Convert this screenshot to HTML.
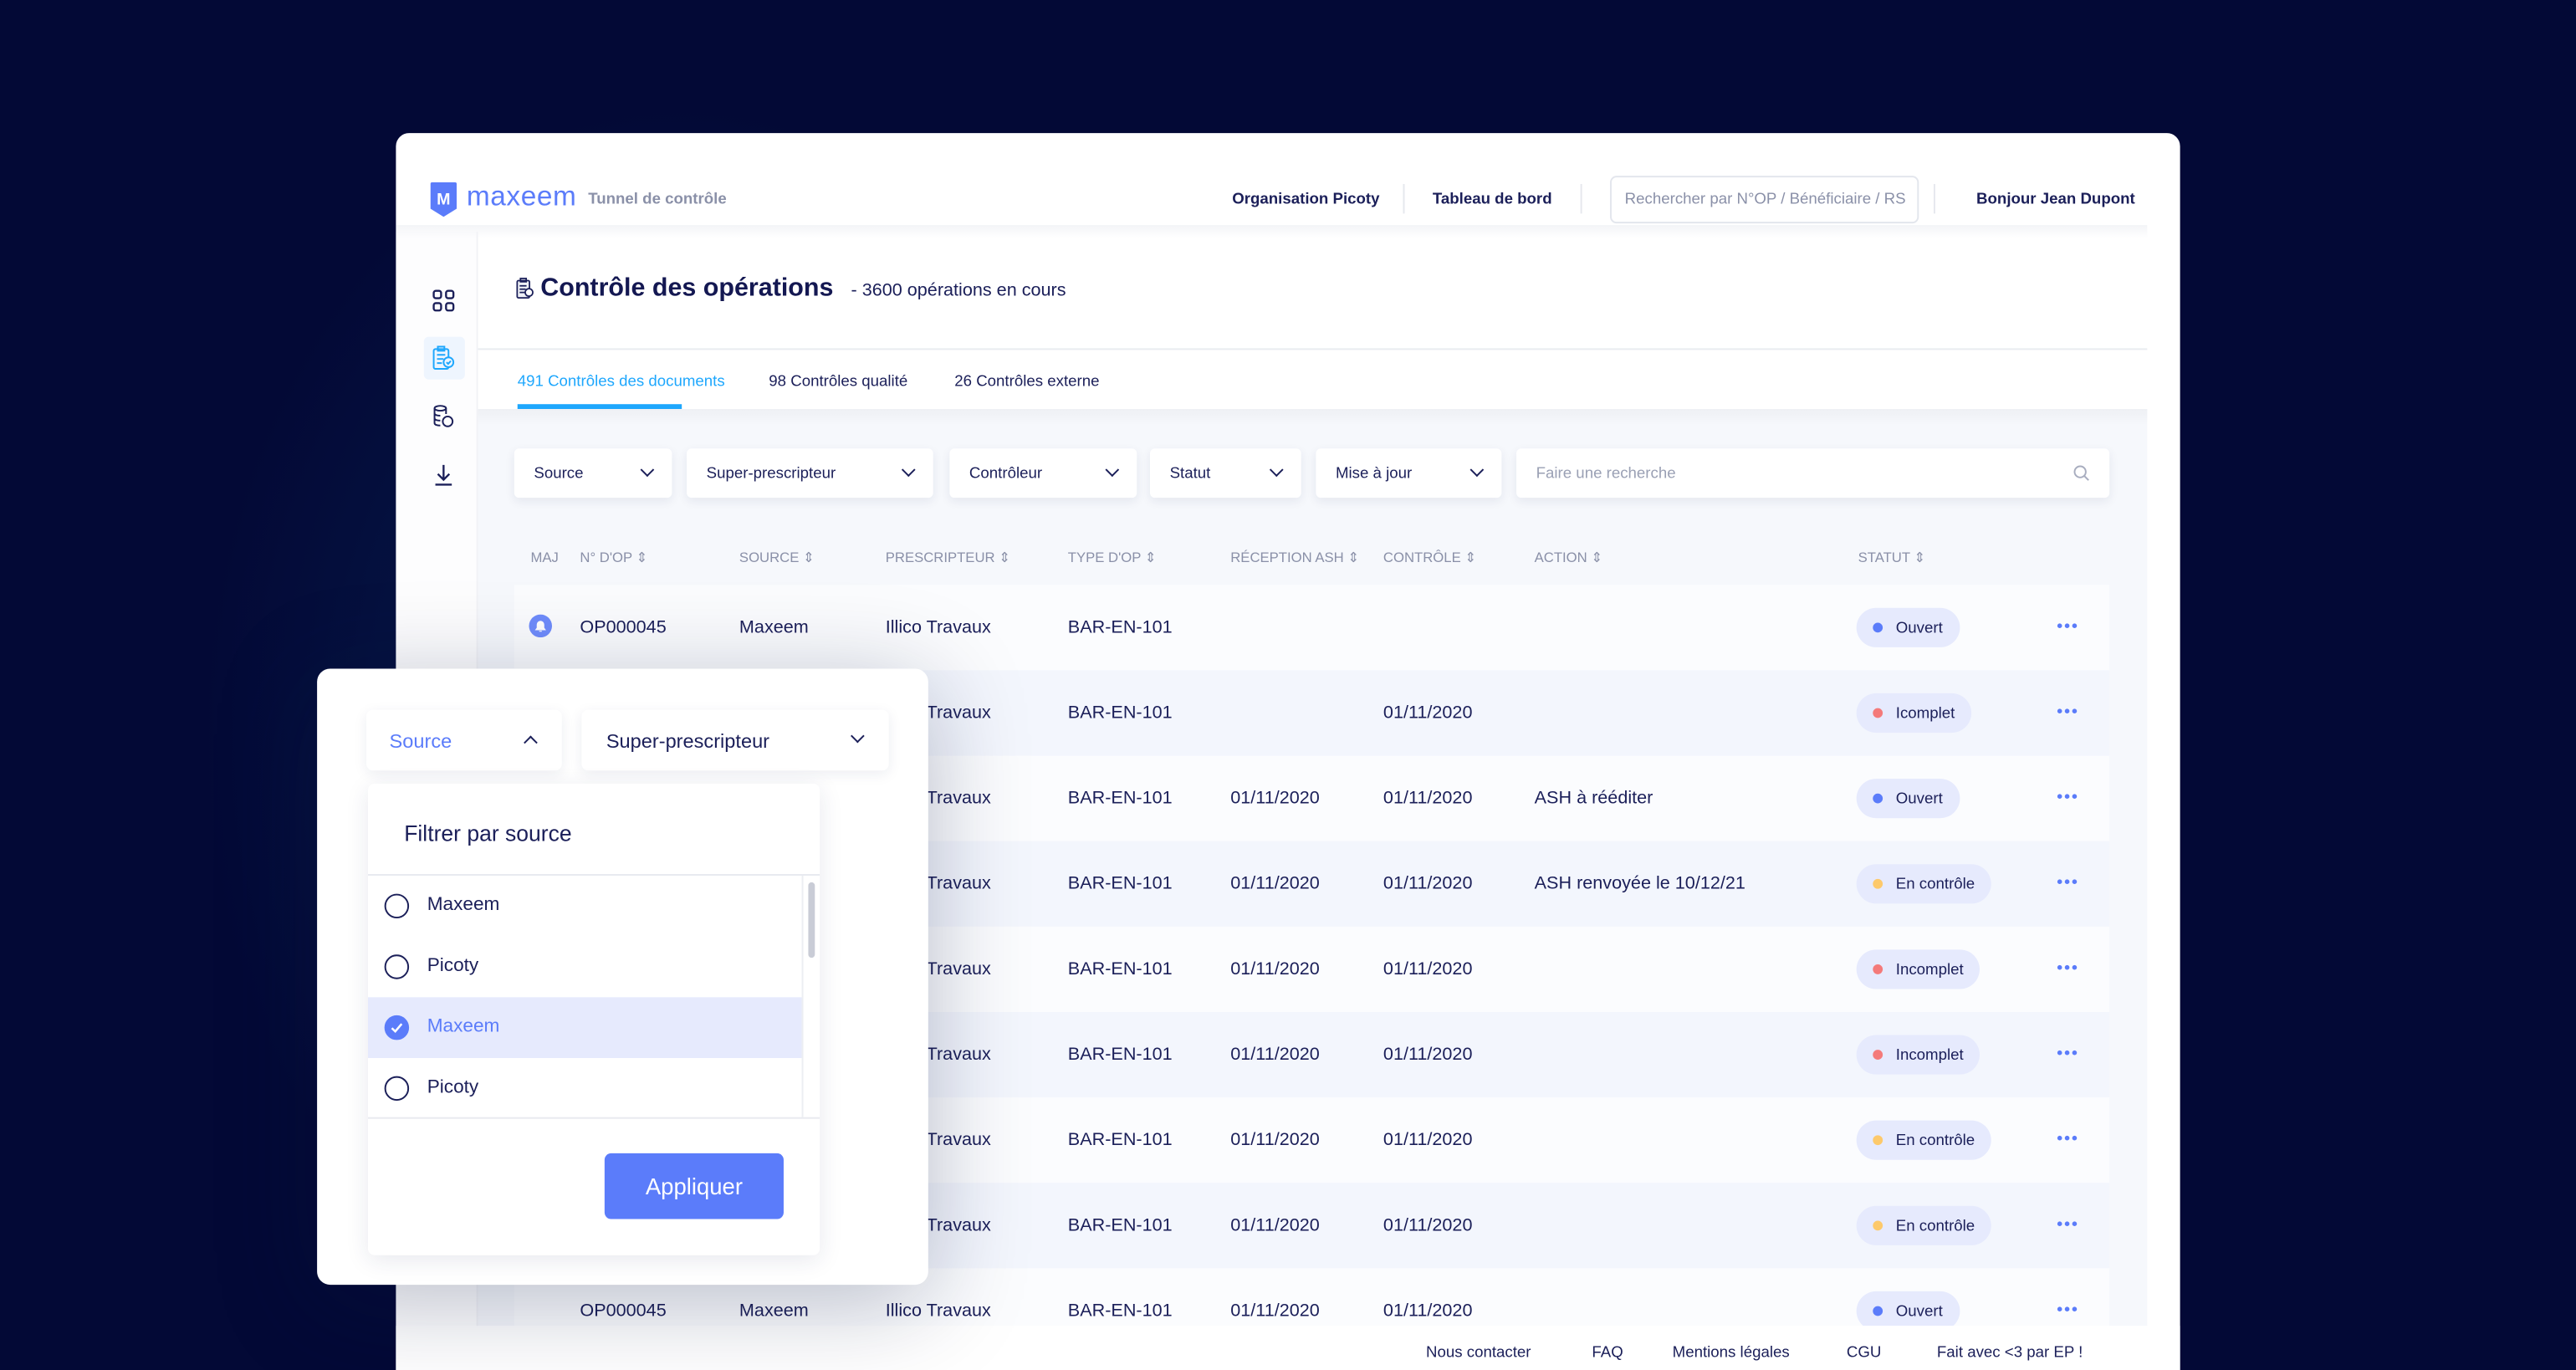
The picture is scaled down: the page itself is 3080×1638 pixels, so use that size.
<!DOCTYPE html>
<html><head><meta charset="utf-8"><style>
*{box-sizing:border-box;margin:0;padding:0}
html,body{width:3080px;height:1638px;overflow:hidden;background:#030936;position:relative}
#s{position:absolute;left:0;top:0;width:1568px;height:833.5px;transform:scale(1.96429);transform-origin:0 0;font-family:"Liberation Sans",sans-serif;color:#1b1f59;overflow:hidden;background:#030936}
.a{position:absolute}
.glow{left:120px;top:60px;width:420px;height:774px;background:radial-gradient(ellipse at 70% 50%,rgba(10,40,90,.7),rgba(3,9,54,0) 70%)}
.card{left:241px;top:81px;width:1086px;height:753px;background:#fff;border-radius:8px 8px 0 0;overflow:hidden}
.t{position:absolute;white-space:nowrap}
.nav{font-size:9.5px;font-weight:bold;color:#1b1f59}
.sep{position:absolute;width:1px;height:18px;background:#e6e8ee}
.dd{position:absolute;top:273px;height:30px;background:#fff;border-radius:3px;box-shadow:0 2px 6px rgba(30,40,90,.08);font-size:9.5px;padding:10px 0 0 12px}
.chev{position:absolute;right:12px;top:10px;width:6px;height:6px;border-right:1.2px solid #1b1f59;border-bottom:1.2px solid #1b1f59;transform:rotate(45deg)}
.th{position:absolute;top:334px;font-size:8.5px;color:#8a90a8}
.row{position:absolute;left:313px;width:971px;height:52px}
.c{position:absolute;top:20px;font-size:11px;color:#1b1f59}
.pill{position:absolute;left:817px;top:14px;height:24px;border-radius:12px;background:#e6eafd;font-size:9.5px;padding:7px 10px 0 24px;color:#1b1f59}
.pill i{position:absolute;left:10px;top:9px;width:6px;height:6px;border-radius:3px}
.dots{position:absolute;left:939px;top:20px;font-size:10px;color:#5b7cfa;letter-spacing:1px;font-weight:bold}
.opt{position:absolute;left:0;width:264px;height:37px;font-size:11.5px}
.rad{position:absolute;left:10px;top:11px;width:15px;height:15px;border:1.2px solid #1b1f59;border-radius:50%}
</style></head><body><div id="s">
<div class="a glow"></div>
<div class="a card">
 <svg class="a" style="left:21px;top:30px" width="16" height="21" viewBox="0 0 16 21"><path d="M0 1Q0 0 1 0H15Q16 0 16 1V16L8 21L0 16Z" fill="#5b7cfa"/><text x="8" y="13.5" font-size="10" font-weight="bold" fill="#fff" text-anchor="middle" font-family="Liberation Sans">M</text></svg>
 <div class="t" style="left:43px;top:29px;font-size:17px;color:#5b7cfa;letter-spacing:.3px">maxeem</div>
 <div class="t" style="left:117px;top:35px;font-size:9.5px;color:#8a90a8;font-weight:bold">Tunnel de contrôle</div>
 <div class="t nav" style="left:509px;top:35px">Organisation Picoty</div>
 <div class="sep" style="left:613px;top:31px"></div>
 <div class="t nav" style="left:631px;top:35px">Tableau de bord</div>
 <div class="sep" style="left:721px;top:31px"></div>
 <div class="a" style="left:739px;top:26px;width:188px;height:29px;border:1px solid #e3e6ed;border-radius:4px"></div>
 <div class="t" style="left:748px;top:35px;font-size:9.5px;color:#8a90a8">Rechercher par N°OP / Bénéficiaire / RS</div>
 <div class="sep" style="left:936px;top:31px"></div>
 <div class="t nav" style="left:962px;top:35px">Bonjour Jean Dupont</div>
 <div class="a" style="left:0;top:60px;width:50px;height:693px;background:#fdfdfe;box-shadow:inset -1px 0 0 #f1f2f6"></div>
 <div class="a" style="left:0;top:56px;width:1066px;height:8px;background:linear-gradient(#f3f4f7,rgba(255,255,255,0))"></div>
</div>
<svg class="a" style="left:263px;top:176px" width="14" height="14" viewBox="0 0 14 14" fill="none" stroke="#1b1f59" stroke-width="1.2"><rect x="1" y="1" width="4.5" height="4.5" rx="1.3"/><rect x="8.5" y="1" width="4.5" height="4.5" rx="1.3"/><rect x="1" y="8.5" width="4.5" height="4.5" rx="1.3"/><rect x="8.5" y="8.5" width="4.5" height="4.5" rx="1.3"/></svg>
<div class="a" style="left:258px;top:205px;width:25px;height:26px;background:#eef5fe;border-radius:3px"></div>
<svg class="a" style="left:263px;top:210px" width="14" height="16" viewBox="0 0 14 16" fill="none" stroke="#1ea7fd" stroke-width="1"><rect x="1" y="2.5" width="9" height="12" rx="1"/><rect x="3.5" y="1" width="4" height="2.5"/><path d="M3 6H8M3 8.5H7M3 11H6"/><circle cx="10" cy="10.5" r="3" fill="#eef5fe"/><path d="M8.8 10.5l1 1 1.6-1.8"/></svg>
<svg class="a" style="left:263px;top:246px" width="14" height="15" viewBox="0 0 14 15" fill="none" stroke="#1b1f59" stroke-width="1"><ellipse cx="5" cy="2.5" rx="3.5" ry="1.5"/><path d="M1.5 2.5V11.5C1.5 12.5 3 13 5 13M1.5 5.5C1.5 6.5 3 7 5 7M1.5 8.5C1.5 9.5 3 10 5 10M8.5 2.5V6"/><circle cx="9.5" cy="10.5" r="3"/></svg>
<svg class="a" style="left:264px;top:282px" width="12" height="14" viewBox="0 0 12 14" fill="none" stroke="#1b1f59" stroke-width="1.2"><path d="M6 1V10M2.5 6.5L6 10L9.5 6.5M1 13H11"/></svg>
<svg class="a" style="left:314px;top:169px" width="11" height="13" viewBox="0 0 11 13" fill="none" stroke="#1b1f59" stroke-width=".9"><rect x=".8" y="1.8" width="7.5" height="10.5" rx=".8" fill="#eef0f6"/><rect x="2.8" y=".5" width="3.5" height="2"/><path d="M2.3 5H6.5M2.3 7H6M2.3 9H5.5"/><circle cx="8" cy="9" r="2.3" fill="#fff"/></svg>
<div class="t" style="left:329px;top:167px;font-size:15.5px;font-weight:bold;color:#141852">Contrôle des opérations</div>
<div class="t" style="left:518px;top:171px;font-size:11px;color:#1b1f59">- 3600 opérations en cours</div>
<div class="a" style="left:291px;top:212px;width:1016px;height:1px;background:#e9ebf0"></div>
<div class="t" style="left:315px;top:227px;font-size:9.5px;color:#1ea7fd">491 Contrôles des documents</div>
<div class="a" style="left:315px;top:246px;width:100px;height:2.5px;background:#1ea7fd"></div>
<div class="t" style="left:468px;top:227px;font-size:9.5px">98 Contrôles qualité</div>
<div class="t" style="left:581px;top:227px;font-size:9.5px">26 Contrôles externe</div>
<div class="a" style="left:291px;top:249px;width:1016px;height:558px;background:#f6f8fc"></div>
<div class="a" style="left:291px;top:249px;width:1016px;height:10px;background:linear-gradient(#eef0f4,rgba(246,248,252,0))"></div>
<div class="dd" style="left:313px;width:96px">Source<i class="chev"></i></div>
<div class="dd" style="left:418px;width:150px">Super-prescripteur<i class="chev"></i></div>
<div class="dd" style="left:578px;width:114px">Contrôleur<i class="chev"></i></div>
<div class="dd" style="left:700px;width:92px">Statut<i class="chev"></i></div>
<div class="dd" style="left:801px;width:113px">Mise à jour<i class="chev"></i></div>
<div class="dd" style="left:923px;width:361px;color:#9aa0b4">Faire une recherche
<svg class="a" style="right:12px;top:10px" width="10" height="10" viewBox="0 0 10 10" fill="none" stroke="#a8adbf" stroke-width="1"><circle cx="4.2" cy="4.2" r="3.4"/><path d="M6.7 6.7L9.3 9.3"/></svg></div>
<div class="th" style="left:323px">MAJ</div>
<div class="th" style="left:353px">N° D'OP ⇕</div>
<div class="th" style="left:450px">SOURCE ⇕</div>
<div class="th" style="left:539px">PRESCRIPTEUR ⇕</div>
<div class="th" style="left:650px">TYPE D'OP ⇕</div>
<div class="th" style="left:749px">RÉCEPTION ASH ⇕</div>
<div class="th" style="left:842px">CONTRÔLE ⇕</div>
<div class="th" style="left:934px">ACTION ⇕</div>
<div class="th" style="left:1131px">STATUT ⇕</div>

<div class="row" style="top:356px;background:#fbfcfe">
 <svg class="a" style="left:9px;top:18px" width="14" height="14" viewBox="0 0 14 14"><circle cx="7" cy="7" r="7" fill="#6f8cfb"/><path d="M4.2 9.3H9.8L9 8.2V6.2A2 2 0 0 0 5 6.2V8.2Z M6.2 10.2H7.8" fill="#fff" stroke="#fff" stroke-width=".6"/></svg>
 <div class="c" style="left:40px">OP000045</div><div class="c" style="left:137px">Maxeem</div><div class="c" style="left:226px">Illico Travaux</div><div class="c" style="left:337px">BAR-EN-101</div>
 <div class="pill"><i style="background:#5b7cfa"></i>Ouvert</div><div class="dots">•••</div></div>
<div class="row" style="top:408px;background:#f3f6fd">
 <div class="c" style="left:226px">Illico Travaux</div><div class="c" style="left:337px">BAR-EN-101</div><div class="c" style="left:529px">01/11/2020</div>
 <div class="pill"><i style="background:#f47a7a"></i>Icomplet</div><div class="dots">•••</div></div>
<div class="row" style="top:460px;background:#fbfcfe">
 <div class="c" style="left:226px">Illico Travaux</div><div class="c" style="left:337px">BAR-EN-101</div><div class="c" style="left:436px">01/11/2020</div><div class="c" style="left:529px">01/11/2020</div><div class="c" style="left:621px">ASH à rééditer</div>
 <div class="pill"><i style="background:#5b7cfa"></i>Ouvert</div><div class="dots">•••</div></div>
<div class="row" style="top:512px;background:#f3f6fd">
 <div class="c" style="left:226px">Illico Travaux</div><div class="c" style="left:337px">BAR-EN-101</div><div class="c" style="left:436px">01/11/2020</div><div class="c" style="left:529px">01/11/2020</div><div class="c" style="left:621px">ASH renvoyée le 10/12/21</div>
 <div class="pill"><i style="background:#fdc96b"></i>En contrôle</div><div class="dots">•••</div></div>
<div class="row" style="top:564px;background:#fbfcfe">
 <div class="c" style="left:226px">Illico Travaux</div><div class="c" style="left:337px">BAR-EN-101</div><div class="c" style="left:436px">01/11/2020</div><div class="c" style="left:529px">01/11/2020</div>
 <div class="pill"><i style="background:#f47a7a"></i>Incomplet</div><div class="dots">•••</div></div>
<div class="row" style="top:616px;background:#f3f6fd">
 <div class="c" style="left:226px">Illico Travaux</div><div class="c" style="left:337px">BAR-EN-101</div><div class="c" style="left:436px">01/11/2020</div><div class="c" style="left:529px">01/11/2020</div>
 <div class="pill"><i style="background:#f47a7a"></i>Incomplet</div><div class="dots">•••</div></div>
<div class="row" style="top:668px;background:#fbfcfe">
 <div class="c" style="left:226px">Illico Travaux</div><div class="c" style="left:337px">BAR-EN-101</div><div class="c" style="left:436px">01/11/2020</div><div class="c" style="left:529px">01/11/2020</div>
 <div class="pill"><i style="background:#fdc96b"></i>En contrôle</div><div class="dots">•••</div></div>
<div class="row" style="top:720px;background:#f3f6fd">
 <div class="c" style="left:226px">Illico Travaux</div><div class="c" style="left:337px">BAR-EN-101</div><div class="c" style="left:436px">01/11/2020</div><div class="c" style="left:529px">01/11/2020</div>
 <div class="pill"><i style="background:#fdc96b"></i>En contrôle</div><div class="dots">•••</div></div>
<div class="row" style="top:772px;background:#fbfcfe;height:35px;overflow:hidden">
 <div class="c" style="left:40px">OP000045</div><div class="c" style="left:137px">Maxeem</div><div class="c" style="left:226px">Illico Travaux</div><div class="c" style="left:337px">BAR-EN-101</div><div class="c" style="left:436px">01/11/2020</div><div class="c" style="left:529px">01/11/2020</div>
 <div class="pill"><i style="background:#5b7cfa"></i>Ouvert</div><div class="dots">•••</div></div>
<div class="a" style="left:241px;top:807px;width:1086px;height:27px;background:#fff"></div>
<div class="t" style="left:868px;top:818px;font-size:9.5px">Nous contacter</div>
<div class="t" style="left:969px;top:818px;font-size:9.5px">FAQ</div>
<div class="t" style="left:1018px;top:818px;font-size:9.5px">Mentions légales</div>
<div class="t" style="left:1124px;top:818px;font-size:9.5px">CGU</div>
<div class="t" style="left:1179px;top:818px;font-size:9.5px">Fait avec &lt;3 par EP !</div>

<div class="a" style="left:193px;top:407px;width:372px;height:375px;background:#fff;border-radius:8px;box-shadow:0 10px 60px rgba(10,20,60,.28)">
 <div class="a" style="left:30px;top:25px;width:119px;height:37px;background:#fff;border-radius:4px;box-shadow:0 2px 8px rgba(30,40,90,.08);font-size:12px;color:#5b7cfa;padding:12px 0 0 14px">Source<i class="a" style="right:16px;top:17px;width:6px;height:6px;border-left:1.2px solid #1b1f59;border-top:1.2px solid #1b1f59;transform:rotate(45deg)"></i></div>
 <div class="a" style="left:161px;top:25px;width:187px;height:37px;background:#fff;border-radius:4px;box-shadow:0 2px 8px rgba(30,40,90,.08);font-size:12px;padding:12px 0 0 15px">Super-prescripteur<i class="a" style="right:16px;top:13px;width:6px;height:6px;border-right:1.2px solid #1b1f59;border-bottom:1.2px solid #1b1f59;transform:rotate(45deg)"></i></div>
 <div class="a" style="left:31px;top:70px;width:275px;height:287px;background:#fff;border-radius:4px;box-shadow:0 3px 14px rgba(30,40,90,.10);overflow:hidden">
  <div class="t" style="left:22px;top:23px;font-size:13.5px">Filtrer par source</div>
  <div class="a" style="left:0;top:55px;width:275px;height:1px;background:#e8eaf0"></div>
  <div class="opt" style="top:56px"><i class="rad"></i><span class="t" style="left:36px;top:12px">Maxeem</span></div>
  <div class="opt" style="top:93px"><i class="rad"></i><span class="t" style="left:36px;top:12px">Picoty</span></div>
  <div class="opt" style="top:130px;background:#e6eafd;color:#5b7cfa"><i class="rad" style="background:#5b7cfa;border-color:#5b7cfa"></i><svg class="a" style="left:13px;top:14px" width="9" height="9" viewBox="0 0 9 9" fill="none" stroke="#fff" stroke-width="1.3"><path d="M1.5 4.8L3.6 6.8L7.5 2.2"/></svg><span class="t" style="left:36px;top:12px">Maxeem</span></div>
  <div class="opt" style="top:167px"><i class="rad"></i><span class="t" style="left:36px;top:12px">Picoty</span></div>
  <div class="a" style="left:264px;top:56px;width:1px;height:147px;background:#eceef2"></div>
  <div class="a" style="left:268px;top:60px;width:4px;height:46px;background:#c9ccd6;border-radius:2px"></div>
  <div class="a" style="left:0;top:203px;width:275px;height:1px;background:#e8eaf0"></div>
  <div class="a" style="left:144px;top:225px;width:109px;height:40px;background:#5b7cfa;border-radius:4px;color:#fff;font-size:14px;text-align:center;line-height:40px">Appliquer</div>
 </div>
</div>
</div></body></html>
